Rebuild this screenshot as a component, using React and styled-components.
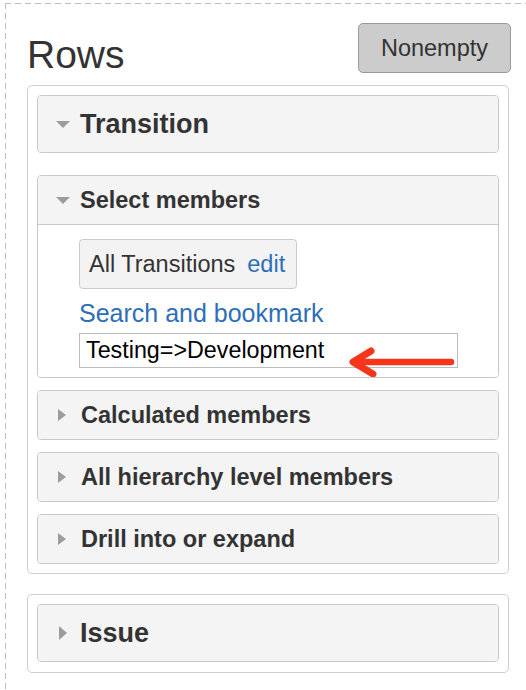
import React from "react";
import styled, { createGlobalStyle } from "styled-components";

const Global = createGlobalStyle`
  html, body { margin: 0; padding: 0; background: #fff; }
  body { font-family: "Liberation Sans", Arial, Helvetica, sans-serif; color: #333; }
  * { box-sizing: border-box; }
`;

const Frame = styled.div`
  margin: 3px 0 0 5px;
  min-height: 687px;
  padding: 20px 17px 0 22px;
  background:
    repeating-linear-gradient(to right, #bdbdbd 0 6px, transparent 6px 10px) left top / 100% 1px no-repeat,
    repeating-linear-gradient(to bottom, #bdbdbd 0 6px, transparent 6px 10px) left top / 1px 100% no-repeat;
  display: flex;
  flex-direction: column;
`;

const HeaderRow = styled.div`
  display: flex;
  justify-content: space-between;
  align-items: flex-start;
  height: 50px;
  margin-bottom: 12px;
`;

const Title = styled.h1`
  margin: 12px 0 0 0;
  font-size: 39px;
  line-height: 39px;
  font-weight: normal;
  color: #333;
`;

const ToggleButton = styled.button`
  width: 153px;
  height: 50px;
  margin-right: -2px;
  background: #cccccc;
  border: 1px solid #9a9a9a;
  border-radius: 5px;
  font-family: inherit;
  font-size: 23.5px;
  color: #333;
  padding: 0;
`;

const Panel = styled.section`
  border: 1px solid #cfcfcf;
  border-radius: 5px;
  padding: 9px 9px ${(p) => p.$padBottom || 9}px;
  display: flex;
  flex-direction: column;
  gap: 12px;
  & + & { margin-top: 20px; }
`;

const Item = styled.div`
  border: 1px solid #c9c9c9;
  border-radius: 4px;
  overflow: hidden;
  background: #f4f4f4;
  margin-bottom: ${(p) => p.$after || 0}px;
`;

const ItemHeader = styled.div`
  box-sizing: content-box;
  height: ${(p) => (p.$large ? "56px" : "48px")};
  display: flex;
  align-items: center;
  padding-left: 18px;
  font-size: ${(p) => (p.$large ? "27px" : "23.5px")};
  font-weight: bold;
  color: #333;
  background: #f4f4f4;
  border-bottom: ${(p) => (p.$divider ? "1px solid #c9c9c9" : "none")};
  white-space: nowrap;
`;

const Caret = styled.span`
  display: inline-block;
  width: 0;
  height: 0;
  flex: none;
  ${(p) =>
    p.$open
      ? `
    border-left: 7px solid transparent;
    border-right: 7px solid transparent;
    border-top: 7px solid #9c9c9c;
    margin-right: 10px;
  `
      : `
    border-top: ${p.$large ? 7 : 6.5}px solid transparent;
    border-bottom: ${p.$large ? 7 : 6.5}px solid transparent;
    border-left: 8px solid #9c9c9c;
    margin-left: ${p.$large ? 3 : 2}px;
    margin-right: ${p.$large ? 13 : 15}px;
  `}
`;

const ItemBody = styled.div`
  background: #fff;
  padding: 14px 0 9px 41px;
  display: flex;
  flex-direction: column;
  align-items: flex-start;
`;

const Chip = styled.div`
  height: 50px;
  display: flex;
  align-items: center;
  gap: 12px;
  padding: 0 11px 0 9px;
  background: #f3f3f3;
  border: 1px solid #cbcbcb;
  border-radius: 4px;
  font-size: 23.5px;
  color: #333;
`;

const Link = styled.a`
  color: #2d6fb7;
  text-decoration: none;
  font-size: ${(p) => p.$size || "23.5px"};
  line-height: ${(p) => p.$lh || "normal"};
  margin: ${(p) => p.$margin || "0"};
`;

const SearchWrap = styled.div`
  position: relative;
  width: 379px;
`;

const SearchInput = styled.input`
  display: block;
  width: 100%;
  height: 35px;
  border: 1px solid #bcbcbc;
  padding: 0 6px;
  font-family: "Liberation Sans", Arial, Helvetica, sans-serif;
  font-size: 23.3px;
  color: #000;
  background: #fff;
  outline: none;
`;

const Arrow = styled.svg`
  position: absolute;
  left: 267px;
  top: 12px;
  width: 111px;
  height: 35px;
  overflow: visible;
`;

function AccordionItem({ title, open, large, after, children }) {
  return (
    <Item $after={after}>
      <ItemHeader $large={large} $divider={!!children}>
        <Caret $open={open} $large={large} />
        {title}
      </ItemHeader>
      {children}
    </Item>
  );
}

export default function App() {
  return (
    <>
      <Global />
      <Frame>
        <HeaderRow>
          <Title>Rows</Title>
          <ToggleButton>Nonempty</ToggleButton>
        </HeaderRow>
        <Panel>
          <AccordionItem title="Transition" open large after={10} />
          <AccordionItem title="Select members" open>
            <ItemBody>
              <Chip>
                <span>All Transitions</span>
                <Link href="#">edit</Link>
              </Chip>
              <Link href="#" $size="25px" $lh="30px" $margin="9px 0 5px 0">
                Search and bookmark
              </Link>
              <SearchWrap>
                <SearchInput defaultValue="Testing=>Development" readOnly />
                <Arrow viewBox="0 0 111 35">
                  <line x1="8" y1="17" x2="105" y2="17" stroke="#f5361b" strokeWidth="6.5" strokeLinecap="round" />
                  <polyline
                    points="25,6 7,17 27,29"
                    fill="none"
                    stroke="#f5361b"
                    strokeWidth="7"
                    strokeLinecap="round"
                    strokeLinejoin="round"
                  />
                </Arrow>
              </SearchWrap>
            </ItemBody>
          </AccordionItem>
          <AccordionItem title="Calculated members" />
          <AccordionItem title="All hierarchy level members" />
          <AccordionItem title="Drill into or expand" />
        </Panel>
        <Panel $padBottom={10}>
          <AccordionItem title="Issue" large />
        </Panel>
      </Frame>
    </>
  );
}
